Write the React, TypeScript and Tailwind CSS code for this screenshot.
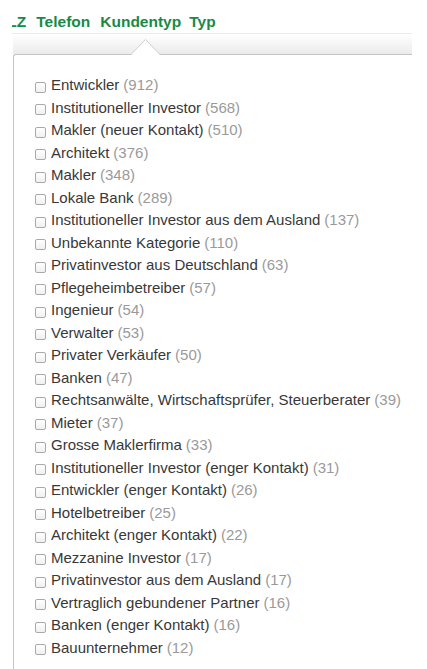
const items: [string, number][] = [
  ["Entwickler", 912],
  ["Institutioneller Investor", 568],
  ["Makler (neuer Kontakt)", 510],
  ["Architekt", 376],
  ["Makler", 348],
  ["Lokale Bank", 289],
  ["Institutioneller Investor aus dem Ausland", 137],
  ["Unbekannte Kategorie", 110],
  ["Privatinvestor aus Deutschland", 63],
  ["Pflegeheimbetreiber", 57],
  ["Ingenieur", 54],
  ["Verwalter", 53],
  ["Privater Verkäufer", 50],
  ["Banken", 47],
  ["Rechtsanwälte, Wirtschaftsprüfer, Steuerberater", 39],
  ["Mieter", 37],
  ["Grosse Maklerfirma", 33],
  ["Institutioneller Investor (enger Kontakt)", 31],
  ["Entwickler (enger Kontakt)", 26],
  ["Hotelbetreiber", 25],
  ["Architekt (enger Kontakt)", 22],
  ["Mezzanine Investor", 17],
  ["Privatinvestor aus dem Ausland", 17],
  ["Vertraglich gebundener Partner", 16],
  ["Banken (enger Kontakt)", 16],
  ["Bauunternehmer", 12],
];

export default function App() {
  return (
    <div
      className="w-[427px] h-[669px] overflow-hidden bg-white"
      style={{ fontFamily: '"Liberation Sans", Arial, sans-serif' }}
    >
      {/* Column header */}
      <div className="ml-[12px] mr-[15px] h-[34px] overflow-hidden border-b border-[#ebebeb]">
        <div className="flex items-center gap-[10px] pt-[13px] text-[15.5px] font-bold leading-[18px] text-[#178a47] whitespace-nowrap">
          <span className="-ml-[15px]">PLZ</span>
          <span>Telefon</span>
          <span className="mr-[-2px]">Kundentyp</span>
          <span>Typ</span>
        </div>
      </div>

      {/* Shadow band above the popup */}
      <div className="ml-[13px] mr-[15px] h-[20px] bg-gradient-to-b from-white to-[#ebebeb]" />

      {/* Filter popup */}
      <div className="relative ml-[13px] mr-[15px]">
        <svg
          className="absolute left-[118px] -top-[16px]"
          width="30"
          height="18"
          viewBox="0 0 30 18"
        >
          <polygon points="0,17 14.5,1.5 29,17" fill="#ffffff" />
          <polyline
            points="0,16.5 14.5,1.5 29,16.5"
            fill="none"
            stroke="#d0d0d0"
            strokeWidth="1"
          />
        </svg>
        <div className="h-[640px] rounded-tl-[3px] border-l border-t border-[#c4c4c4] bg-white pl-[21px] pt-[19px]">
          <ul className="text-[15px] leading-[22.5px]">
            {items.map(([label, count], i) => (
              <li key={i} className="flex items-center whitespace-nowrap">
                <span className="mr-[5px] mt-[4px] inline-block h-[11px] w-[11px] shrink-0 rounded-[2px] border border-[#a9a9a9] bg-gradient-to-b from-white to-[#f0f0f0]" />
                <span className="text-[#383838]">{label}</span>
                <span className="ml-[4px] text-[#9a9a9a]">({count})</span>
              </li>
            ))}
          </ul>
        </div>
      </div>
    </div>
  );
}
